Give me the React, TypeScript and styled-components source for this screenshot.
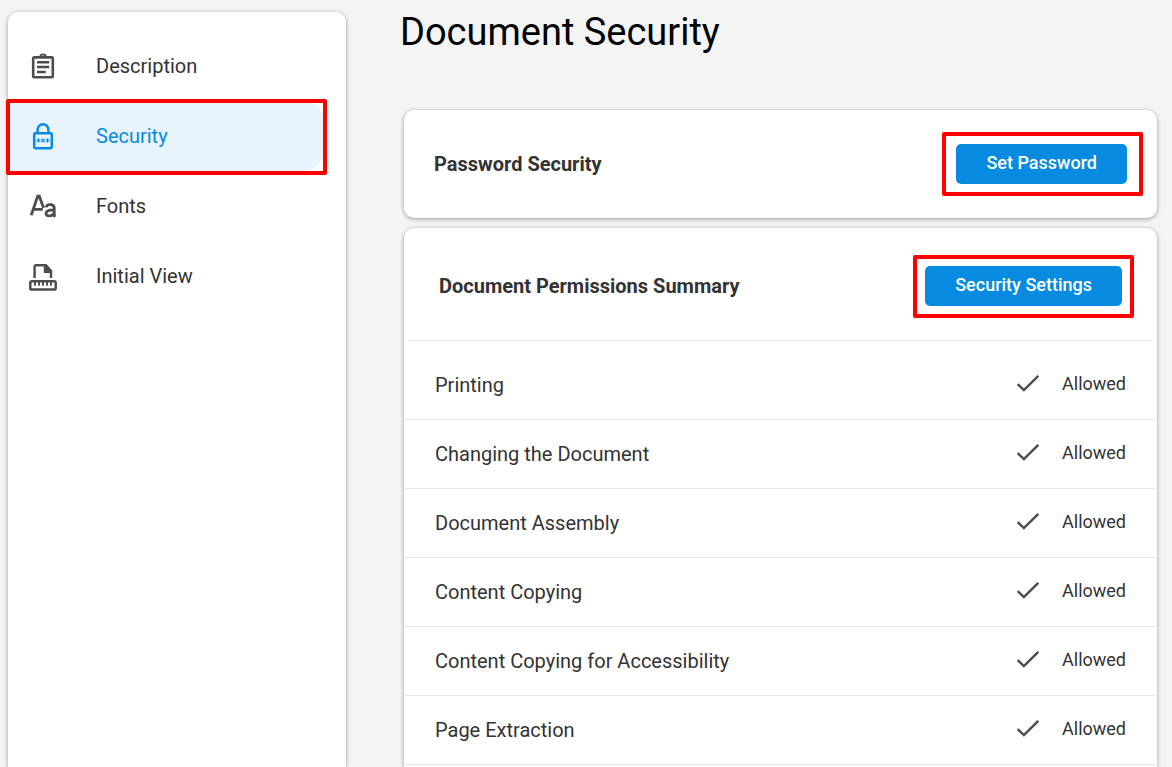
import React from 'react';
import styled, { createGlobalStyle, css } from 'styled-components';

const GlobalStyle = createGlobalStyle`
  *, *::before, *::after { box-sizing: border-box; }
  body {
    margin: 0;
    background: #f4f4f4;
    color: #333;
    font-family: Roboto, "Liberation Sans", sans-serif;
  }
`;

const cardSurface = css`
  background: #fff;
  box-shadow: 0 1px 4px rgba(0, 0, 0, 0.38);
`;

const Page = styled.div`
  display: flex;
  gap: 58px;
  height: 100vh;
  padding: 0 15px 0 8px;
  overflow: hidden;
`;

const Sidebar = styled.nav`
  ${cardSurface}
  flex: 0 0 338px;
  margin-top: 12px;
  padding: 19px 22px 0 0;
  border-radius: 10px 10px 0 0;
`;

const NavList = styled.ul`
  margin: 0;
  padding: 0;
  list-style: none;
`;

const Highlight = styled.span<{ $inset: string }>`
  position: absolute;
  inset: ${(p) => p.$inset};
  border: 4px solid #f00;
  border-radius: 2px;
  pointer-events: none;
`;

const NavItem = styled.li`
  position: relative;
`;

const NavLink = styled.a<{ $active?: boolean }>`
  display: flex;
  align-items: center;
  gap: 38px;
  height: 70px;
  padding-left: 20px;
  border-radius: 0 20px 20px 0;
  background: ${(p) => (p.$active ? '#e7f4fe' : 'transparent')};
  color: ${(p) => (p.$active ? '#078be0' : '#333')};
  font-size: 20px;
  line-height: 24px;
  text-decoration: none;

  svg {
    flex: none;
    color: ${(p) => (p.$active ? '#078be0' : '#4d4d4d')};
  }
`;

const Main = styled.main`
  display: flex;
  flex: 1;
  flex-direction: column;
  min-width: 0;
`;

const Title = styled.h1`
  margin: 0 0 54px -4px;
  padding-top: 8px;
  color: #000;
  font-size: 38px;
  font-weight: 400;
  line-height: 48px;
`;

const Card = styled.section<{ $grow?: boolean }>`
  ${cardSurface}
  flex: ${(p) => (p.$grow ? '1 0 auto' : 'none')};
  margin-bottom: ${(p) => (p.$grow ? '0' : '10px')};
  border-radius: ${(p) => (p.$grow ? '10px 10px 0 0' : '10px')};
`;

const CardHeader = styled.header<{ $divided?: boolean }>`
  display: flex;
  align-items: center;
  justify-content: space-between;
  height: ${(p) => (p.$divided ? '113px' : '108px')};
  margin: ${(p) => (p.$divided ? '0 5px' : '0')};
  padding: ${(p) => (p.$divided ? '4px 30px 0' : '0 30px')};
  border-bottom: ${(p) => (p.$divided ? '1px solid #e4e4e4' : '0')};
`;

const CardTitle = styled.h2`
  margin: 0;
  font-size: 20px;
  font-weight: 700;
  line-height: 24px;
`;

const Action = styled.div`
  position: relative;
`;

const Button = styled.button`
  display: block;
  height: 40px;
  padding: 0 30px 2px;
  border: 0;
  border-radius: 5px;
  background: #078be0;
  color: #fff;
  font-family: inherit;
  font-size: 18px;
  font-weight: 500;
  line-height: 24px;
`;

const Permissions = styled.table`
  width: 100%;
  padding: 10px 1px 0;
  border-spacing: 0;
`;

const cell = css`
  height: 69px;
  padding: 0;
  border-bottom: 1px solid #e4e4e4;
  font-weight: 400;
  text-align: left;
`;

const Name = styled.th`
  ${cell}
  padding-left: 30px;
  font-size: 20px;
  line-height: 24px;
`;

const Status = styled.td`
  ${cell}
  padding-right: 30px;
`;

const StatusValue = styled.span`
  display: flex;
  align-items: center;
  justify-content: flex-end;
  gap: 22px;
  padding-bottom: 2px;
  font-size: 18px;
  line-height: 24px;
`;

const ClipboardIcon = () => (
  <svg width="30" height="30" viewBox="0 0 30 30" fill="none" stroke="currentColor" aria-hidden="true">
    <rect x="5.2" y="6.4" width="19.600" height="19.800" rx="1.200" strokeWidth="2.600" />
    <path d="M12.300 5.500a2.700 2 0 0 1 5.400 0" strokeWidth="2" />
    <path d="M9 11.200h12.200M9 16.100h12.200M9 21h8.800" strokeWidth="2.500" />
  </svg>
);

const LockIcon = () => (
  <svg width="30" height="30" viewBox="0 0 30 30" fill="none" stroke="currentColor" aria-hidden="true">
    <rect x="6.2" y="12.200" width="17.600" height="15" rx="1.200" strokeWidth="2.500" />
    <path d="M9.600 12V8.600a5.400 5.400 0 0 1 10.800 0V12" strokeWidth="2.500" />
    <path
      d="M10.500 17.300v4.400M8.600 18.500l3.800 2M12.400 18.500l-3.800 2M15 17.300v4.400M13.100 18.500l3.800 2M16.900 18.500l-3.800 2M19.500 17.300v4.400M17.600 18.500l3.800 2M21.400 18.500l-3.800 2"
      strokeWidth="1"
    />
  </svg>
);

const FontsIcon = () => (
  <svg width="30" height="30" viewBox="0 0 30 30" fill="none" stroke="currentColor" aria-hidden="true">
    <path d="M3.200 24.300L9.700 5.200h1.600L15.600 17M5.800 18.300h9" strokeWidth="2.800" />
    <path
      d="M18.200 16.200c.6-3.400 8-3.600 8 .8v5.500c0 1.500.2 2.500.7 3.500M26.200 18.900c-4.800 0-8.200.7-8.200 3.500 0 3.600 6.200 3.300 8.200-.6"
      strokeWidth="2.900"
    />
  </svg>
);

const ViewIcon = () => (
  <svg width="30" height="30" viewBox="0 0 30 30" fill="none" stroke="currentColor" aria-hidden="true">
    <path d="M6.600 17V5.800q0-1.500 1.500-1.500h9.700l5.200 5.700V17" strokeWidth="2.400" />
    <path d="M15.800 4v8h8.300V9.800L18.200 3.300z" fill="currentColor" stroke="none" />
    <rect x="2.300" y="20.200" width="25.400" height="8.300" rx="1.600" strokeWidth="2.500" />
    <path d="M7 20v4.700M11 20v4.700M15 20v4.700M19 20v4.700M23 20v4.700" strokeWidth="1.900" />
  </svg>
);

const CheckIcon = () => (
  <svg width="24" height="24" viewBox="0 0 24 24" fill="none" stroke="#4d4d4d" strokeWidth="2.500" aria-hidden="true">
    <path d="M1.700 12.200l6.200 5.900L22.300 3.900" />
  </svg>
);

const sections = [
  { label: 'Description', Icon: ClipboardIcon },
  { label: 'Security', Icon: LockIcon, active: true },
  { label: 'Fonts', Icon: FontsIcon },
  { label: 'Initial View', Icon: ViewIcon },
];

const permissions = [
  'Printing',
  'Changing the Document',
  'Document Assembly',
  'Content Copying',
  'Content Copying for Accessibility',
  'Page Extraction',
];

export default function App() {
  return (
    <>
      <GlobalStyle />
      <Page>
        <Sidebar aria-label="Document properties">
          <NavList>
            {sections.map(({ label, Icon, active }) => (
              <NavItem key={label}>
                <NavLink href="#" $active={active} aria-current={active ? 'page' : undefined}>
                  <Icon />
                  {label}
                </NavLink>
                {active && <Highlight $inset="-2px -3px -4px -2px" />}
              </NavItem>
            ))}
          </NavList>
        </Sidebar>
        <Main>
          <Title>Document Security</Title>
          <Card>
            <CardHeader>
              <CardTitle>Password Security</CardTitle>
              <Action>
                <Button type="button">Set Password</Button>
                <Highlight $inset="-12px -16px -12px -14px" />
              </Action>
            </CardHeader>
          </Card>
          <Card $grow>
            <CardHeader $divided>
              <CardTitle>Document Permissions Summary</CardTitle>
              <Action>
                <Button type="button">Security Settings</Button>
                <Highlight $inset="-11px -12px -12px -12px" />
              </Action>
            </CardHeader>
            <Permissions>
              <tbody>
                {permissions.map((name) => (
                  <tr key={name}>
                    <Name scope="row">{name}</Name>
                    <Status>
                      <StatusValue>
                        <CheckIcon />
                        Allowed
                      </StatusValue>
                    </Status>
                  </tr>
                ))}
              </tbody>
            </Permissions>
          </Card>
        </Main>
      </Page>
    </>
  );
}
